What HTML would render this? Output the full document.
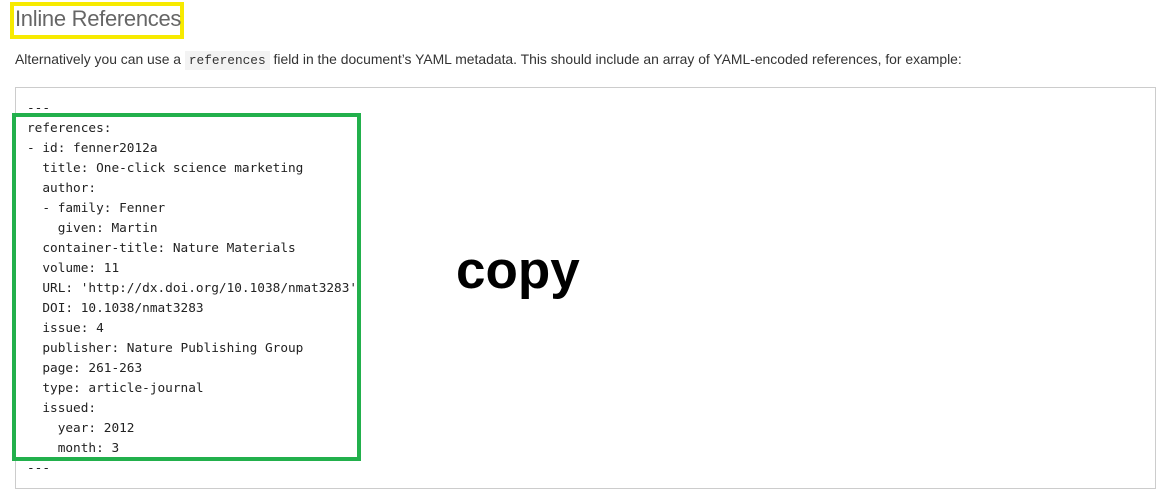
<!DOCTYPE html>
<html><head><style>
body{margin:0;width:1161px;height:496px;background:#fff;position:relative;overflow:hidden;font-family:"Liberation Sans",sans-serif;}
.yb{position:absolute;left:10px;top:2px;width:166px;height:29px;border:4px solid #f7ea00;}
h2{position:absolute;left:15px;top:6px;margin:0;font-weight:300;font-size:22px;color:#666;letter-spacing:-0.3px;}
p{position:absolute;left:15px;top:51px;margin:0;font-size:13.9px;color:#333;white-space:nowrap;}
code{font-family:"Liberation Mono",monospace;background:#f3f3f3;padding:2px 4px;font-size:12.8px;}
.box{position:absolute;left:15px;top:87px;width:1139px;height:400px;border:1px solid #ccc;}
pre{position:absolute;left:27px;top:99px;margin:0;font-family:"DejaVu Sans Mono","Liberation Mono",monospace;font-size:12.75px;line-height:20px;color:#222;}
.gb{position:absolute;left:12px;top:113px;width:341px;height:340px;border:4px solid #22b04c;}
.copy{position:absolute;left:456px;top:239px;font-size:53px;font-weight:bold;color:#000;line-height:64px;}
</style></head><body>
<div class="yb"></div>
<h2>Inline References</h2>
<p>Alternatively you can use a <code>references</code> field in the document’s YAML metadata. This should include an array of YAML-encoded references, for example:</p>
<div class="box"></div>
<pre>---
references:
- id: fenner2012a
  title: One-click science marketing
  author:
  - family: Fenner
    given: Martin
  container-title: Nature Materials
  volume: 11
  URL: 'http://dx.doi.org/10.1038/nmat3283'
  DOI: 10.1038/nmat3283
  issue: 4
  publisher: Nature Publishing Group
  page: 261-263
  type: article-journal
  issued:
    year: 2012
    month: 3
---</pre>
<div class="gb"></div>
<div class="copy">copy</div>
</body></html>
